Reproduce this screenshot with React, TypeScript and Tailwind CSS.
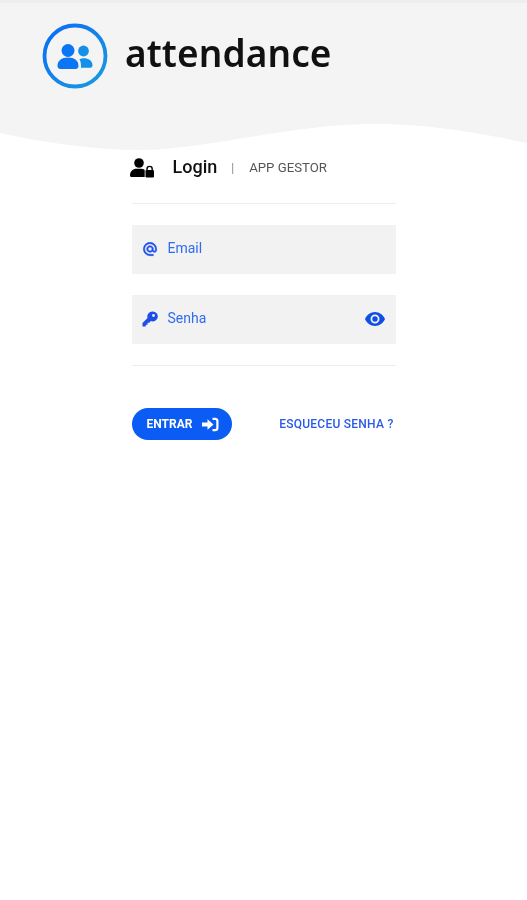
import React from "react";

function Logo() {
  return (
    <svg width="66" height="66" viewBox="0 0 66 66" className="shrink-0">
      <defs>
        <linearGradient id="ring" x1="0" y1="0" x2="1" y2="1">
          <stop offset="0" stopColor="#0a6cf5" />
          <stop offset="1" stopColor="#1a9be0" />
        </linearGradient>
      </defs>
      <circle cx="33" cy="33" r="30.500" fill="none" stroke="url(#ring)" strokeWidth="3.800" />
      <circle cx="26" cy="27.500" r="6.500" fill="#0a76f3" />
      <path d="M15.500 43c0-5.500 4-8.500 10.500-8.500S36.500 37.500 36.500 43c0 2-1.300 3-3 3h-15c-1.700 0-3-1-3-3z" fill="#0a76f3" />
      <circle cx="41.500" cy="28" r="5.400" fill="#1490e6" />
      <path d="M37.500 36.200c1.200-.7 2.500-1 4-1 5 0 9 2.500 9 7 0 1.500-1 2.600-2.500 2.600h-9c.3-3.200-.3-6.300-1.500-8.600z" fill="#1490e6" />
    </svg>
  );
}

function UserLock() {
  return (
    <svg width="25" height="20" viewBox="0 0 25 20">
      <circle cx="9" cy="5" r="4.800" fill="#000" />
      <path d="M0 17.500c0-4.500 3-6.800 6.500-6.800h4.500c1.500 0 2.700.4 3.700 1v7.300H1.500c-.9 0-1.500-.6-1.500-1.500z" fill="#000" />
      <path d="M17 12.500v-1.500a2.600 2.600 0 0 1 5.200 0v1.500" fill="none" stroke="#000" strokeWidth="1.400" />
      <rect x="15.500" y="12" width="8.500" height="7.500" rx="1.200" fill="#000" />
    </svg>
  );
}

function At() {
  return (
    <svg width="16" height="16" viewBox="0 0 24 24" className="shrink-0">
      <path
        fill="#1d4fe8"
        stroke="#1d4fe8"
        strokeWidth="0.800"
        d="M12 2a10 10 0 1 0 0 20h5v-2h-5a8 8 0 1 1 8-8v1.430c0 .79-.71 1.570-1.500 1.570s-1.500-.78-1.500-1.570V12a5 5 0 1 0-1.460 3.530A3.700 3.700 0 0 0 18.500 17c1.970 0 3.500-1.600 3.500-3.570V12A10 10 0 0 0 12 2zm0 13a3 3 0 1 1 0-6 3 3 0 0 1 0 6z"
      />
    </svg>
  );
}

function Key() {
  return (
    <svg width="16" height="16" viewBox="0 0 16 16" className="shrink-0">
      <path
        fill="#1d4fe8"
        d="M10.300 0.500a5 5 0 0 0-4.800 6.400L0.500 12v3.500h3.300v-1.800h1.800v-1.900h1.700l1.600-1.700a5 5 0 1 0 1.400-9.600zm1.200 2.600a1.400 1.400 0 1 1 0 2.800 1.400 1.400 0 0 1 0-2.800z"
      />
    </svg>
  );
}

function Eye() {
  return (
    <svg width="20" height="14" viewBox="0 0 20 14">
      <path
        fill="#0f4fe6"
        fillRule="evenodd"
        d="M10 0C5.500 0 1.700 2.900 0 7c1.700 4.100 5.500 7 10 7s8.300-2.900 10-7c-1.700-4.100-5.500-7-10-7zm0 11.500a4.500 4.500 0 1 1 0-9 4.500 4.500 0 0 1 0 9zM10 4.300a2.700 2.700 0 1 0 0 5.400 2.700 2.700 0 0 0 0-5.400z"
      />
    </svg>
  );
}

function SignIn() {
  return (
    <svg width="17" height="15" viewBox="0 0 17 15" fill="#fff">
      <path d="M0 5.500h5.500V2.200L11.500 7.500l-6 5.300V9.500H0z" />
      <path d="M10.500 0.800H13a3.500 3.500 0 0 1 3.500 3.500v6.400a3.500 3.500 0 0 1-3.500 3.500H10.500v-2.200H13a1.300 1.300 0 0 0 1.300-1.300V4.300A1.300 1.300 0 0 0 13 3H10.500z" />
    </svg>
  );
}

export default function App() {
  return (
    <div className="min-h-[900px] bg-white font-['Roboto',sans-serif] blur-[0.4px]">
      <header className="relative h-[155px] bg-[#f4f4f4] border-t-[3px] border-[#eeeeee]">
        <div className="flex items-center pl-[42px] pt-[20px]">
          <Logo />
          <span className="ml-[17px] -mt-[7px] font-['Noto_Sans',sans-serif] text-[37px] leading-[44px] font-semibold tracking-[0.1px] text-[#111]">
            attendance
          </span>
        </div>
        <svg
          className="absolute left-0 bottom-0 w-full h-[34px]"
          viewBox="0 0 527 34"
          preserveAspectRatio="none"
        >
          <path
            d="M0 12C45 22 95 29 140 29C205 29 290 3 375 3C430 3 480 12 527 22V34H0Z"
            fill="#fff"
          />
        </svg>
      </header>

      <main className="mx-auto w-[264px]">
        <div className="-mt-[8px] box-content flex h-[42px] items-center border-b border-[#ececec] pb-[14px]">
          <span className="-ml-[2px]">
            <UserLock />
          </span>
          <span className="mb-[4px] ml-[18px] text-[18px] font-medium text-[#111]">Login</span>
          <span className="ml-[14px] text-[12px] text-[#888]">|</span>
          <span className="ml-[15px] text-[13.200px] text-[#555]">APP GESTOR</span>
        </div>

        <div className="mt-[21px] flex h-[49px] items-center bg-[#f2f2f2] pl-[10px] pr-[11px] pb-[2px]">
          <At />
          <span className="ml-[10px] text-[14px] text-[#2f6df0]">Email</span>
        </div>

        <div className="mt-[21px] flex h-[49px] items-center bg-[#f2f2f2] pl-[10px] pr-[11px] pb-[2px]">
          <Key />
          <span className="ml-[10px] text-[14px] text-[#2f6df0]">Senha</span>
          <span className="ml-auto flex">
            <Eye />
          </span>
        </div>

        <div className="mt-[21px] border-b border-[#ececec]" />

        <div className="mt-[42px] flex items-center justify-between">
          <button className="flex h-[32px] w-[100px] items-center justify-center gap-[10px] rounded-full bg-[#0a5cf5] pl-[3px] text-[12px] font-bold text-white">
            ENTRAR
            <SignIn />
          </button>
          <span className="mr-[2px] text-[12px] font-medium tracking-[0.25px] text-[#2a5ae8]">ESQUECEU SENHA ?</span>
        </div>
      </main>
    </div>
  );
}
